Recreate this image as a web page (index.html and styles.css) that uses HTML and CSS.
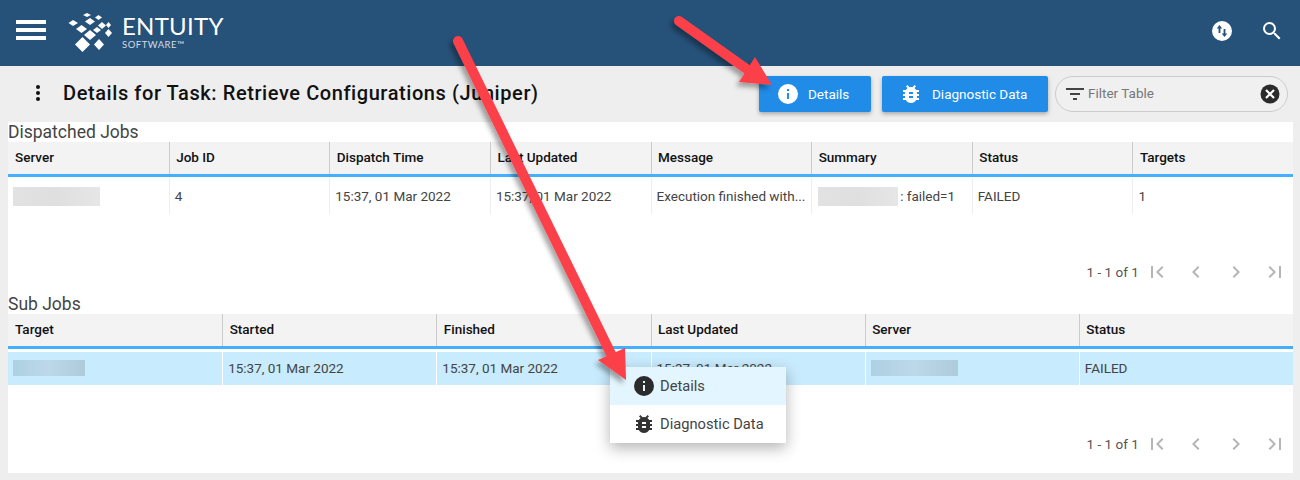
FILE: index.html
```html
<!DOCTYPE html>
<html lang="en">
<head>
<meta charset="utf-8">
<title>Details for Task</title>
<link rel="stylesheet" href="styles.css">
</head>
<body>
<header class="topbar">
  <div class="hamburger"><span></span><span></span><span></span></div>
  <div class="logo">
    <svg class="logo-mark" width="48" height="44" viewBox="66 10 48 44">
      <g fill="#fff">
        <path d="M68.500 23 73 20 78 23 73 26Z"/>
        <path d="M83 15 87 13 91 15 87 17Z"/>
        <path d="M95 17.500 98.500 15 102 17.500 98.500 20Z"/>
        <path d="M76 29 81.500 25 87 29 81.500 33Z"/>
        <path d="M85 21.500 90 18 95 21.500 90 25Z"/>
        <path d="M98 25.500 102 22 106 25.500 102 29Z"/>
        <path d="M106 25 108.500 22 111 25 108.500 28Z"/>
        <path d="M93 30 97 27 101 30 97 33Z"/>
        <path d="M84 35 90 30 96 35 90 40Z"/>
        <path d="M105 33 108.500 29 112 33 108.500 37Z"/>
        <path d="M75 44.500 82.500 37 90 44.500 82.500 52Z"/>
        <path d="M94 44.500 99 39 104 44.500 99 50Z"/>
      </g>
    </svg>
    <div class="logo-text"><div class="logo-name">ENTUITY</div><div class="logo-sub">SOFTWARE™</div></div>
  </div>
  <div class="top-actions">
    <svg width="20" height="20" viewBox="0 0 20 20"><circle cx="10" cy="10" r="10" fill="#fff"/><path d="M7.500 4 4.800 7.500H6.600V12H8.400V7.500H10.200ZM12.500 16 15.200 12.500H13.400V8H11.600V12.500H9.800Z" fill="#265178"/></svg>
    <svg width="24" height="24" viewBox="0 0 24 24"><path fill="#fff" d="M15.500 14h-.79l-.28-.27A6.470 6.470 0 0 0 16 9.500 6.500 6.500 0 1 0 9.500 16c1.610 0 3.090-.59 4.230-1.570l.27.28v.79l5 4.990L20.490 19l-4.990-5zm-6 0C7.010 14 5 11.990 5 9.500S7.010 5 9.500 5 14 7.010 14 9.500 11.990 14 9.500 14z"/></svg>
  </div>
</header>

<div class="toolbar">
  <div class="kebab"><i></i><i></i><i></i></div>
  <h1 class="title">Details for Task: Retrieve Configurations (Juniper)</h1>
  <button class="btn btn-details">
    <svg width="24" height="24" viewBox="0 0 24 24"><path fill="#fff" d="M12 2a10 10 0 1 0 0 20 10 10 0 0 0 0-20zm1 15h-2v-6h2zm0-8h-2V7h2z"/></svg>
    <span class="btn-label">Details</span>
  </button>
  <button class="btn btn-diag">
    <svg width="24" height="24" viewBox="0 0 24 24"><path fill="#fff" d="M20 8h-2.810a5.985 5.985 0 0 0-1.820-1.960L17 4.410 15.590 3l-2.170 2.170a6 6 0 0 0-2.830 0L8.410 3 7 4.410l1.620 1.630C7.880 6.550 7.260 7.220 6.810 8H4v2h2.090c-.05.330-.9.660-.09 1v1H4v2h2v1c0 .340.040.670.090 1H4v2h2.810c1.040 1.790 2.970 3 5.190 3s4.150-1.210 5.190-3H20v-2h-2.090c.05-.330.090-.660.090-1v-1h2v-2h-2v-1c0-.340-.040-.670-.090-1H20V8zm-6 8h-4v-2h4v2zm0-4h-4v-2h4v2z"/></svg>
    <span class="btn-label">Diagnostic Data</span>
  </button>
  <div class="filter">
    <svg width="24" height="24" viewBox="0 0 24 24"><path fill="#444" d="M3 6h18v2H3zM7 11h10v2H7zM10 16h4v2h-4z"/></svg>
    <span class="filter-text">Filter Table</span>
    <span class="filter-clear"><svg width="20" height="20" viewBox="0 0 20 20"><circle cx="10" cy="10" r="9.500" fill="#2b2b2b"/><path d="M6 6 14 14M14 6 6 14" stroke="#fff" stroke-width="2.200"/></svg></span>
  </div>
</div>

<main class="panel">
  <section class="section section-dispatched">
    <h2 class="section-title">Dispatched Jobs</h2>
    <div class="thead cols-8">
      <div>Server</div><div>Job ID</div><div>Dispatch Time</div><div>Last Updated</div><div>Message</div><div>Summary</div><div>Status</div><div>Targets</div>
    </div>
    <div class="trow cols-8">
      <div><span class="blur blur-server"></span></div>
      <div>4</div>
      <div>15:37, 01 Mar 2022</div>
      <div>15:37, 01 Mar 2022</div>
      <div>Execution finished with...</div>
      <div><span class="blur blur-summary"></span><span class="after-blur">: failed=1</span></div>
      <div>FAILED</div>
      <div>1</div>
    </div>
    <div class="pager">
      <span>1 - 1 of 1</span>
      <svg class="pg" viewBox="0 0 24 24"><path d="M18.410 16.590 13.820 12l4.590-4.590L17 6l-6 6 6 6zM6 6h2v12H6z"/></svg>
      <svg class="pg" viewBox="0 0 24 24"><path d="M15.410 7.410 14 6l-6 6 6 6 1.410-1.410L10.830 12z"/></svg>
      <svg class="pg" viewBox="0 0 24 24"><path d="M10 6 8.590 7.410 13.170 12l-4.580 4.590L10 18l6-6z"/></svg>
      <svg class="pg" viewBox="0 0 24 24"><path d="M5.590 7.410 10.180 12l-4.590 4.590L7 18l6-6-6-6zM16 6h2v12h-2z"/></svg>
    </div>
  </section>
  <section class="section section-sub">
    <h2 class="section-title">Sub Jobs</h2>
    <div class="thead cols-6">
      <div>Target</div><div>Started</div><div>Finished</div><div>Last Updated</div><div>Server</div><div>Status</div>
    </div>
    <div class="trow trow-selected cols-6">
      <div><span class="blur blur-target"></span></div>
      <div>15:37, 01 Mar 2022</div>
      <div>15:37, 01 Mar 2022</div>
      <div>15:37, 01 Mar 2022</div>
      <div><span class="blur blur-server2"></span></div>
      <div>FAILED</div>
    </div>
    <div class="pager">
      <span>1 - 1 of 1</span>
      <svg class="pg" viewBox="0 0 24 24"><path d="M18.410 16.590 13.820 12l4.590-4.590L17 6l-6 6 6 6zM6 6h2v12H6z"/></svg>
      <svg class="pg" viewBox="0 0 24 24"><path d="M15.410 7.410 14 6l-6 6 6 6 1.410-1.410L10.830 12z"/></svg>
      <svg class="pg" viewBox="0 0 24 24"><path d="M10 6 8.590 7.410 13.170 12l-4.580 4.590L10 18l6-6z"/></svg>
      <svg class="pg" viewBox="0 0 24 24"><path d="M5.590 7.410 10.180 12l-4.590 4.590L7 18l6-6-6-6zM16 6h2v12h-2z"/></svg>
    </div>
  </section>
</main>

<div class="menu">
  <div class="menu-item menu-item-active">
    <svg width="24" height="24" viewBox="0 0 24 24"><path fill="#2b2b2b" d="M12 2a10 10 0 1 0 0 20 10 10 0 0 0 0-20zm1 15h-2v-6h2zm0-8h-2V7h2z"/></svg>
    <span>Details</span>
  </div>
  <div class="menu-item">
    <svg width="24" height="24" viewBox="0 0 24 24"><path fill="#333" d="M20 8h-2.810a5.985 5.985 0 0 0-1.820-1.960L17 4.410 15.590 3l-2.170 2.170a6 6 0 0 0-2.830 0L8.410 3 7 4.410l1.620 1.630C7.880 6.550 7.260 7.220 6.810 8H4v2h2.090c-.05.330-.9.660-.09 1v1H4v2h2v1c0 .340.040.670.090 1H4v2h2.810c1.040 1.790 2.970 3 5.190 3s4.150-1.210 5.190-3H20v-2h-2.090c.05-.330.090-.660.090-1v-1h2v-2h-2v-1c0-.340-.040-.670-.090-1H20V8zm-6 8h-4v-2h4v2zm0-4h-4v-2h4v2z"/></svg>
    <span>Diagnostic Data</span>
  </div>
</div>

<svg class="arrows" width="1300" height="480" viewBox="0 0 1300 480">
  <defs><filter id="sh" x="-20%" y="-20%" width="140%" height="140%"><feDropShadow dx="-3" dy="4" stdDeviation="2.500" flood-color="#000" flood-opacity=".35"/></filter></defs>
  <g filter="url(#sh)" fill="#fb4049">
    <path d="M679 21 748 70" stroke="#fb4049" stroke-width="10" stroke-linecap="round"/>
    <path d="M772 85 739 82 755 57Z"/>
    <path d="M458 41 611 354" stroke="#fb4049" stroke-width="10" stroke-linecap="round"/>
    <path d="M626 380 598 360 625 348Z"/>
  </g>
</svg>
</body>
</html>
```
FILE: styles.css
```css
* { box-sizing: border-box; }
html, body { margin: 0; padding: 0; }
body {
  width: 1300px;
  height: 480px;
  background: #eeeeee;
  font-family: Roboto, "Liberation Sans", sans-serif;
  font-size: 13.500px;
  color: #333;
  overflow: hidden;
  position: relative;
}
.topbar {
  height: 66px;
  background: #265178;
  display: flex;
  align-items: center;
  padding: 0 16px;
}
.hamburger { width: 30px; display: flex; flex-direction: column; gap: 4px; margin-bottom: 6px; }
.hamburger span { height: 4px; background: #fff; display: block; }
.logo { display: flex; align-items: center; margin-left: 20px; margin-bottom: 2px; gap: 8px; }
.logo-text { color: #fff; }
.logo-name { font-family: Lato, sans-serif; font-size: 24px; line-height: 24px; letter-spacing: .25px; }
.logo-sub { font-family: Lato, sans-serif; font-size: 9.500px; line-height: 11px; letter-spacing: .5px; color: #d5dde5; margin-top: 1px; }
.top-actions { margin-left: auto; display: flex; align-items: center; gap: 28px; margin-bottom: 4px; }
.toolbar {
  height: 56px;
  display: flex;
  align-items: center;
  padding: 0 12px 0 26px;
}
.kebab { width: 24px; display: flex; flex-direction: column; align-items: center; gap: 2px; margin-bottom: 3px; }
.kebab i { width: 4px; height: 4px; background: #111; border-radius: 50%; display: block; }
.title { font-size: 20px; font-weight: 500; color: #111; margin: 0 auto 3px 13px; letter-spacing: .58px; }
.btn {
  height: 36px;
  border: 0;
  border-radius: 2px;
  background: #208ce8;
  color: #fff;
  font: 400 13.500px Roboto, sans-serif;
  display: flex;
  align-items: center;
  box-shadow: 0 2px 4px rgba(0,0,0,.3);
  padding: 0 0 0 17px;
}
.btn-label { margin-bottom: 1px; }
.btn-details { width: 112px; gap: 8px; }
.btn-diag { width: 166px; margin-left: 11px; gap: 9px; }
.filter {
  width: 233px;
  height: 36px;
  margin-left: 7px;
  border: 1px solid #ccc;
  border-radius: 18px;
  background: #f0f0f0;
  display: flex;
  align-items: center;
  padding: 0 7px;
  font-size: 13.500px;
}
.filter-text { color: #777; margin-left: 1px; margin-bottom: 3px; }
.filter-clear { margin-left: auto; display: flex; }
.panel {
  margin-left: 8px;
  width: 1285px;
  height: 351px;
  background: #fff;
}
.section-title { margin: 0; height: 20px; font-size: 17.500px; line-height: 20px; font-weight: 400; color: #444; }
.thead {
  height: 35px;
  background: #f3f3f3;
  border-bottom: 3px solid #42b0ff;
  display: grid;
  color: #111;
  font-weight: 500;
  font-size: 13.500px;
}
.thead > div { padding: 7px 6.500px 0; line-height: 16px; border-left: 1px solid #ccc; height: 32px; }
.thead > div:first-child { border-left: 0; padding-left: 7px; }
.cols-8 { grid-template-columns: repeat(8, 1fr); }
.cols-6 { grid-template-columns: repeat(6, 1fr); }
.trow { display: grid; height: 36px; color: #444; margin-top: 1px; }
.trow > div {
  display: flex;
  align-items: center;
  padding: 0 5px;
  border-left: 1px solid #eee;
  white-space: nowrap;
  overflow: hidden;
}
.trow > div:first-child { border-left: 0; }
.trow-selected { background: #c8ebfd; margin-top: 3px; height: 33px; }
.trow-selected > div { border-left-color: #fff; padding-bottom: 1px; }
.blur { display: block; height: 19px; background: linear-gradient(90deg, #e2e2e2, #dfdfdf 50%, #e6e6e6); }
.blur-server { width: 87px; }
.blur-summary { width: 80px; margin-left: 1px; }
.after-blur { margin-left: 2px; }
.blur-target { width: 72px; height: 16px; background: linear-gradient(90deg, #aed0e2, #bcd9ea 50%, #aecbdb); }
.blur-server2 { width: 87px; height: 16px; background: linear-gradient(90deg, #aed0e2, #bcd9ea 50%, #aecbdb); }
.pager {
  display: flex;
  align-items: center;
  justify-content: flex-end;
  color: #555;
  padding-right: 6px;
  gap: 15.300px;
  font-size: 13.500px;
}
.section-dispatched .pager { height: 80px; padding-top: 36px; }
.section-sub .pager { height: 88px; padding-top: 30px; }
.pg { width: 24px; height: 24px; fill: #b5b5b5; }
.pager span { margin-right: -9px; }
.menu {
  position: absolute;
  left: 610px;
  top: 367px;
  width: 176px;
  background: #fff;
  box-shadow: 0 5px 14px rgba(0,0,0,.3);
}
.menu-item { height: 38px; display: flex; align-items: center; padding-left: 22px; gap: 4px; color: #444; font-size: 14.700px; }
.menu-item-active { background: #e3f5fe; }
.arrows { position: absolute; left: 0; top: 0; pointer-events: none; }
```
